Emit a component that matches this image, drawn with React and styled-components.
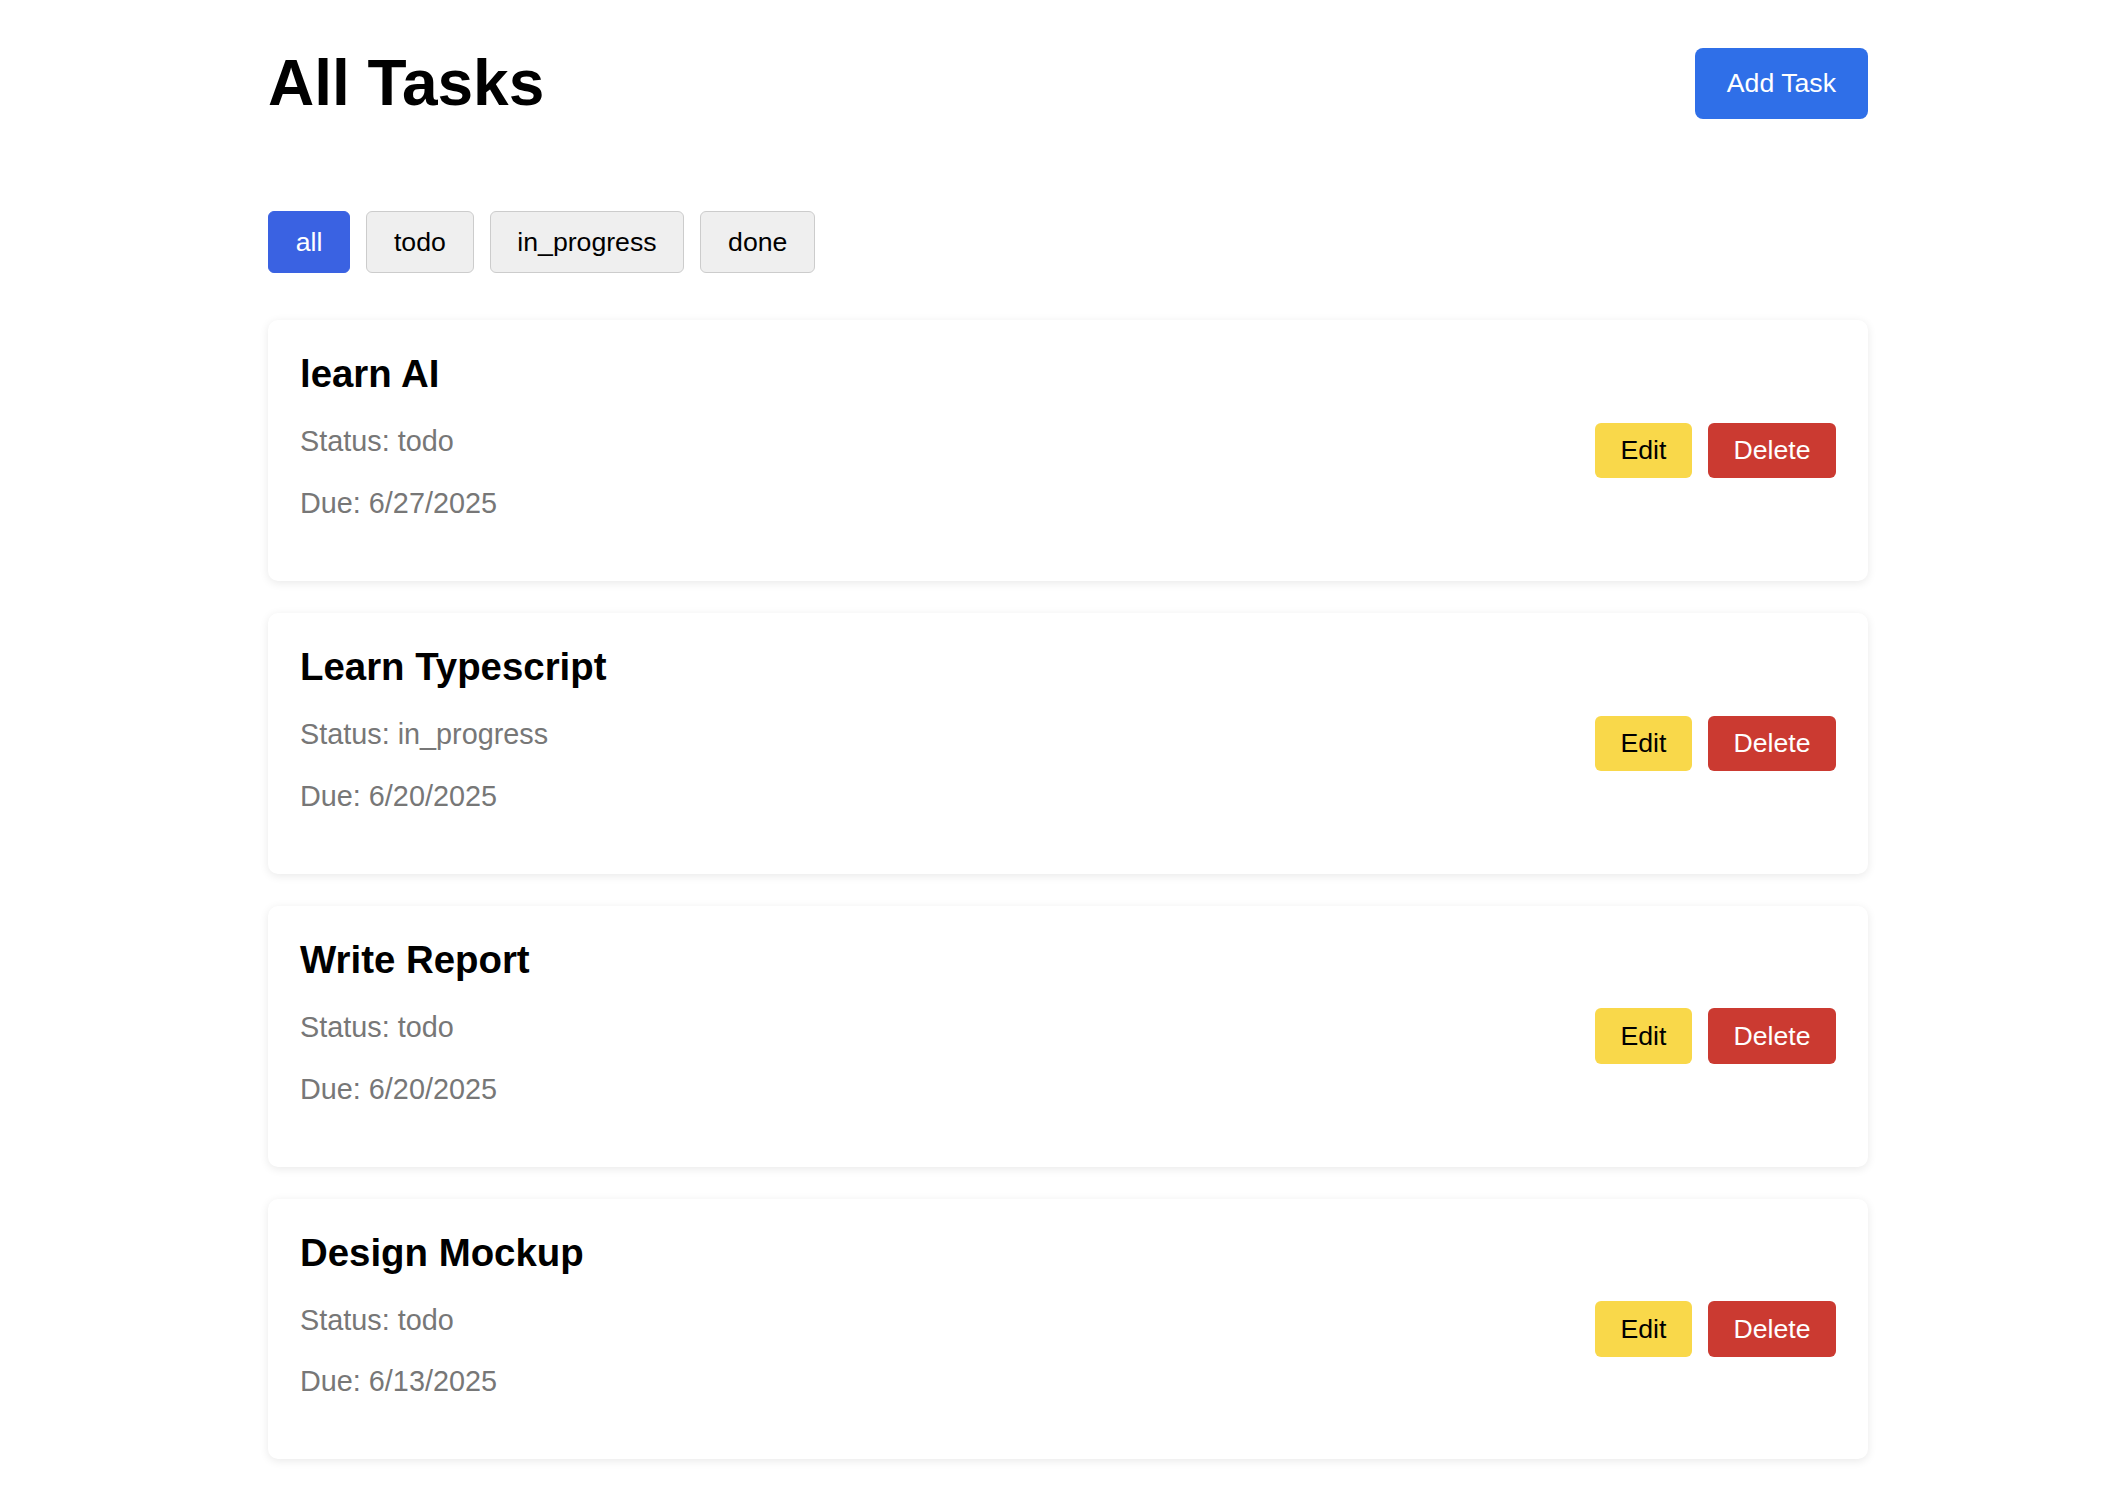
import React, { useState } from "react";
import styled, { createGlobalStyle } from "styled-components";

const GlobalStyle = createGlobalStyle`
  body {
    margin: 0;
    background: #ffffff;
    font-family: "Liberation Sans", Arial, sans-serif;
    line-height: 1.15;
    color: #000;
  }
  button {
    line-height: 1.15;
  }
`;

const Page = styled.div`
  padding: 47px 0 40px 268px;
`;

const Container = styled.div`
  width: 1600px;
`;

const Header = styled.header`
  display: flex;
  justify-content: space-between;
  align-items: center;
`;

const Title = styled.h1`
  margin: 0;
  font-size: 64px;
  font-weight: bold;
`;

const AddButton = styled.button`
  font-family: inherit;
  font-size: 26.67px;
  padding: 20px 32px;
  background: #2f6fe8;
  color: #fff;
  border: none;
  border-radius: 8px;
  cursor: pointer;
`;

const Filters = styled.div`
  display: flex;
  gap: 16px;
  margin-top: 90px;
  margin-bottom: 47px;
`;

const FilterButton = styled.button`
  font-family: inherit;
  font-size: 26.67px;
  padding: 15px 26.75px;
  border: 1.5px solid ${(p) => (p.$active ? "#3a62e2" : "#cccccc")};
  background: ${(p) => (p.$active ? "#3a62e2" : "#efefef")};
  color: ${(p) => (p.$active ? "#fff" : "#000")};
  border-radius: 6px;
  cursor: pointer;
`;

const List = styled.div`
  display: flex;
  flex-direction: column;
  gap: 32px;
`;

const Card = styled.div`
  display: flex;
  justify-content: space-between;
  align-items: center;
  padding: 32px;
  background: #fff;
  border-radius: 10px;
  box-shadow: 0 2px 10px rgba(0, 0, 0, 0.09);
`;

const Info = styled.div``;

const CardTitle = styled.h3`
  margin: 0;
  font-size: 38.4px;
  font-weight: bold;
`;

const Meta = styled.p`
  margin: 28.8px 0;
  font-size: 28.8px;
  color: #777777;
`;

const Actions = styled.div`
  display: flex;
  gap: 16px;
`;

const ActionButton = styled.button`
  font-family: inherit;
  font-size: 26.67px;
  padding: 12.5px 25.5px;
  border: none;
  border-radius: 6px;
  background: ${(p) => (p.$danger ? "#cb3a31" : "#f9d84a")};
  color: ${(p) => (p.$danger ? "#fff" : "#000")};
  cursor: pointer;
`;

const tasks = [
  { id: 1, title: "learn AI", status: "todo", due: "6/27/2025" },
  { id: 2, title: "Learn Typescript", status: "in_progress", due: "6/20/2025" },
  { id: 3, title: "Write Report", status: "todo", due: "6/20/2025" },
  { id: 4, title: "Design Mockup", status: "todo", due: "6/13/2025" },
];

const filters = ["all", "todo", "in_progress", "done"];

export default function App() {
  const [filter, setFilter] = useState("all");
  const shown = filter === "all" ? tasks : tasks.filter((t) => t.status === filter);

  return (
    <Page>
      <GlobalStyle />
      <Container>
        <Header>
          <Title>All Tasks</Title>
          <AddButton>Add Task</AddButton>
        </Header>
        <Filters>
          {filters.map((f) => (
            <FilterButton key={f} $active={f === filter} onClick={() => setFilter(f)}>
              {f}
            </FilterButton>
          ))}
        </Filters>
        <List>
          {shown.map((t) => (
            <Card key={t.id}>
              <Info>
                <CardTitle>{t.title}</CardTitle>
                <Meta>Status: {t.status}</Meta>
                <Meta>Due: {t.due}</Meta>
              </Info>
              <Actions>
                <ActionButton>Edit</ActionButton>
                <ActionButton $danger>Delete</ActionButton>
              </Actions>
            </Card>
          ))}
        </List>
      </Container>
    </Page>
  );
}
